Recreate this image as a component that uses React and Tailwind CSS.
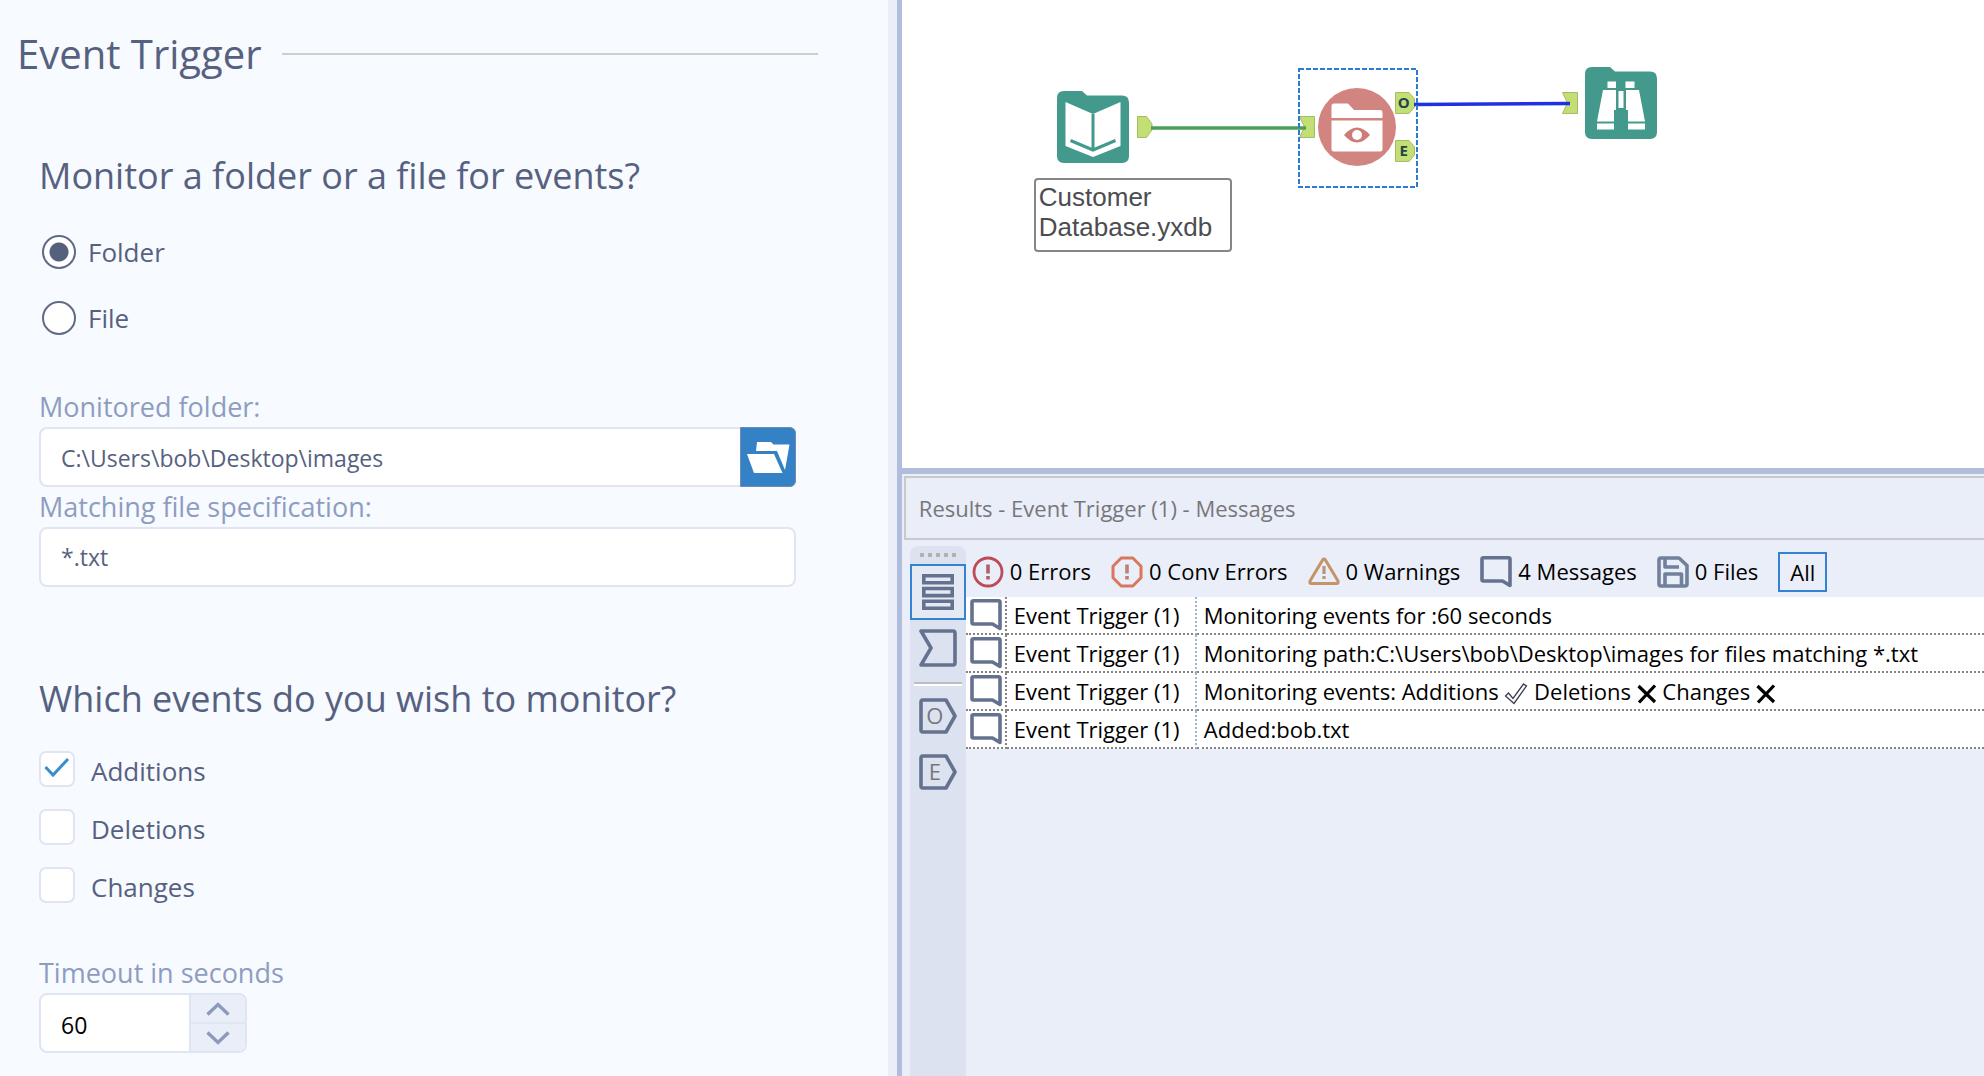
import React, { useState } from "react";

const SLATE = "#64718f";

function ChatIcon({ className }) {
  return (
    <svg className={className} viewBox="0 0 32 32" fill="none" stroke={SLATE} strokeWidth="3.6" strokeLinejoin="round" aria-hidden="true">
      <path d="M3.5 1.8H28.5Q30 1.8 30 3.3V29.5L22.5 25H3.5Q2 25 2 23.5V3.3Q2 1.8 3.5 1.8Z" />
    </svg>
  );
}

function ErrorIcon() {
  return (
    <svg className="size-8" viewBox="0 0 32 32" fill="none" aria-hidden="true">
      <circle cx="16" cy="16" r="14" stroke="#bf4a57" strokeWidth="2.8" />
      <path d="M16 8.5V17.500M16 20V23.5" stroke="#b0606c" strokeWidth="3.6" />
    </svg>
  );
}

function ConvErrorIcon() {
  return (
    <svg className="size-8" viewBox="0 0 32 32" fill="none" aria-hidden="true">
      <path d="M10.2 2H21.8L30 10.2V21.8L21.8 30H10.2L2 21.8V10.2Z" stroke="#d9775c" strokeWidth="3" strokeLinejoin="round" />
      <path d="M16 8.5V17.500M16 20V23.5" stroke="#bd7f76" strokeWidth="3.6" />
    </svg>
  );
}

function WarningIcon() {
  return (
    <svg className="size-8" viewBox="0 0 32 32" fill="none" aria-hidden="true">
      <path d="M14.6 3.9Q16 2.1 17.4 3.900L30 25.1Q30.6 27.5 28.6 27.5H3.4Q1.4 27.5 2 25.1Z" stroke="#c49468" strokeWidth="3" strokeLinejoin="round" />
      <path d="M16 10V18M16 20V23" stroke="#b89678" strokeWidth="3.2" />
    </svg>
  );
}

function SaveIcon() {
  return (
    <svg className="size-8" viewBox="0 0 32 32" fill="none" stroke="#71809b" strokeWidth="3.6" strokeLinejoin="round" aria-hidden="true">
      <path d="M4 2H22L30 9.5V28Q30 30 28 30H4Q2 30 2 28V4Q2 2 4 2Z" />
      <path d="M8 2V11H22" />
      <path d="M8 30V18H24.500V30" />
    </svg>
  );
}

function OutlineCheck() {
  return (
    <svg className="inline-block h-6 w-6 align-middle" viewBox="0 0 24 24" fill="none" stroke="#3c3c50" strokeWidth="1.3" role="img" aria-label="yes">
      <path d="M1.500 14L4.500 11L9 16.500L19.500 2L22.500 4L10 21.500Z" />
    </svg>
  );
}

function Cross() {
  return (
    <svg className="inline-block size-5 align-middle" viewBox="0 0 20 20" stroke="#000" strokeWidth="3.2" role="img" aria-label="no">
      <path d="M1.500 2L18 18M18 1.500L2 18.500" />
    </svg>
  );
}

function Radio({ id, label, checked, onChange }) {
  return (
    <div className="flex h-9 items-center">
      <input
        type="radio"
        id={id}
        name="target"
        checked={checked}
        onChange={onChange}
        className="ml-[3px] size-[34px] appearance-none rounded-full border-2 border-[#5f6b86] bg-white checked:bg-[radial-gradient(circle,#55607c_9px,white_10px)]"
      />
      <label htmlFor={id} className="pl-3 text-[26px] leading-9">{label}</label>
    </div>
  );
}

function Check({ id, label, initial }) {
  return (
    <div className="flex h-9 items-center">
      <span className="relative size-9">
        <input
          type="checkbox"
          id={id}
          defaultChecked={initial}
          className="peer block size-9 appearance-none rounded-[7px] border-2 border-[#dfe5f2] bg-white"
        />
        <svg className="pointer-events-none absolute inset-0 hidden size-9 peer-checked:block" viewBox="0 0 36 36" fill="none" stroke="#3a8ccc" strokeWidth="3" aria-hidden="true">
          <path d="M6.500 16L14 24L29 8" />
        </svg>
      </span>
      <label htmlFor={id} className="pl-4 pt-1 text-[26px] leading-9">{label}</label>
    </div>
  );
}

const fieldLabel = "block text-[27px] leading-9 text-[#8e9dbf]";
const heading = "text-[36px] leading-[48px]";

function ConfigPanel() {
  const [target, setTarget] = useState("folder");
  const [seconds, setSeconds] = useState(60);
  return (
    <div className="flex border-r-[5px] border-[#b0bddd] bg-[#eaeef8] pr-[9px]">
      <form className="flex-1 bg-[#f7faff] text-[#566180]">
        <div className="flex items-center gap-5 pl-[17px] pr-[70px] pt-[30px]">
          <h1 className="text-[40px] leading-[48px]">Event Trigger</h1>
          <hr className="flex-1 border-t-2 border-[#cfcfd1]" />
        </div>

        <div className="pl-[39px] pr-[92px]">
          <fieldset>
            <legend className={`${heading} pt-[74px]`}>Monitor a folder or a file for events?</legend>
            <div className="mt-[34px] flex flex-col gap-[30px]">
              <Radio id="t-folder" label="Folder" checked={target === "folder"} onChange={() => setTarget("folder")} />
              <Radio id="t-file" label="File" checked={target === "file"} onChange={() => setTarget("file")} />
            </div>
          </fieldset>

          <label htmlFor="folder" className={`${fieldLabel} mt-[53px]`}>Monitored folder:</label>
          <div className="mt-0.5 flex h-[60px]">
            <input
              id="folder"
              type="text"
              defaultValue={"C:\\Users\\bob\\Desktop\\images"}
              className="min-w-0 flex-1 rounded-l-lg border-2 border-r-0 border-[#dfe5f2] bg-white pl-5 pt-0.5 text-[23px]"
            />
            <button type="button" aria-label="Browse folder" className="flex w-14 items-center justify-center rounded-r-md border border-[#6f8bb0] bg-[#3482c5]">
              <svg className="h-8 w-11" viewBox="0 0 44 32" fill="white" aria-hidden="true">
                <path d="M11 1H25L27.500 3.500H43.500L39 29L31 10H10Z" />
                <path d="M1 13H28L36.500 32H8Z" />
              </svg>
            </button>
          </div>

          <label htmlFor="spec" className={`${fieldLabel} mt-0.5`}>Matching file specification:</label>
          <input
            id="spec"
            type="text"
            defaultValue="*.txt"
            className="mt-0.5 block h-[60px] w-full rounded-lg border-2 border-[#dfe5f2] bg-white pl-5 text-[23px]"
          />

          <fieldset>
            <legend className={`${heading} pt-[88px]`}>Which events do you wish to monitor?</legend>
            <div className="mt-7 flex flex-col gap-[22px]">
              <Check id="additions" label="Additions" initial />
              <Check id="deletions" label="Deletions" />
              <Check id="changes" label="Changes" />
            </div>
          </fieldset>

          <label htmlFor="timeout" className={`${fieldLabel} mt-[52px]`}>Timeout in seconds</label>
          <div className="mb-3 mt-0.5 flex h-[60px] w-[208px] overflow-hidden rounded-lg border-2 border-[#dfe5f2] bg-white">
            <input
              id="timeout"
              type="text"
              inputMode="numeric"
              value={seconds}
              onChange={(e) => setSeconds(Number(e.target.value) || 0)}
              className="min-w-0 flex-1 pl-5 pt-1 text-[23px] text-black"
            />
            <div className="flex w-14 flex-col border-l-2 border-[#dfe5f2] bg-[#eaeef8]">
              <button type="button" aria-label="Increase" onClick={() => setSeconds(seconds + 1)} className="flex flex-1 items-center justify-center border-b-2 border-[#dfe5f2]">
                <svg className="h-[14px] w-6" viewBox="0 0 24 14" fill="none" stroke="#8c9abb" strokeWidth="3.4" aria-hidden="true"><path d="M1.500 12.500L12 2.500L22.500 12.500" /></svg>
              </button>
              <button type="button" aria-label="Decrease" onClick={() => setSeconds(Math.max(0, seconds - 1))} className="flex flex-1 items-center justify-center">
                <svg className="h-[14px] w-6" viewBox="0 0 24 14" fill="none" stroke="#8c9abb" strokeWidth="3.4" aria-hidden="true"><path d="M1.500 1.500L12 11.500L22.500 1.500" /></svg>
              </button>
            </div>
          </div>
        </div>
      </form>
    </div>
  );
}

function OutPort({ letter, className }) {
  return (
    <span className={`absolute h-[22px] ${letter ? "w-5" : "w-4"} ${className}`}>
      <svg className="absolute inset-0 size-full" viewBox={letter ? "0 0 20 22" : "0 0 16 22"} fill="#c2de74" stroke="#a3bd63" aria-hidden="true">
        {letter ? <path d="M.5 .5H14L19.500 7V15L14 21.500H.5Z" /> : <path d="M.5 .5H9.500L15 8V14L9.500 21.500H.5Z" />}
      </svg>
      {letter && <span className="relative block pr-0.5 text-center text-[15px] font-bold leading-[21px] text-[#26434a]">{letter}</span>}
    </span>
  );
}

function InPort({ className }) {
  return (
    <svg className={`absolute h-[22px] w-4 ${className}`} viewBox="0 0 16 22" fill="#c2de74" stroke="#a3bd63" aria-hidden="true">
      <path d="M.5 .5H15.500V21.500H.5L5.500 11Z" />
    </svg>
  );
}

function Workflow() {
  return (
    <section aria-label="Workflow canvas" className="relative h-[468px] overflow-hidden bg-white">
      <svg className="absolute left-[155px] top-[91px] size-[72px]" viewBox="0 0 72 72" role="img" aria-label="Input data">
        <path d="M7 0H25L30 4.500H65Q72 4.500 72 11.500V65Q72 72 65 72H7Q0 72 0 65V7Q0 0 7 0Z" fill="#439a8c" />
        <path d="M8.500 11L36 23L63.500 11V55L36 66L8.500 55Z" fill="white" />
        <path d="M36 23V59M13.500 49.500L36 59L58.500 49.500" fill="none" stroke="#439a8c" strokeWidth="3" />
      </svg>
      <OutPort className="left-[235px] top-[116px]" />
      <div className="absolute left-[132px] top-[178px] w-[198px] rounded-sm border-2 border-[#868686] pb-2 pl-[3px] pt-0.5 font-['Liberation_Sans',sans-serif] text-[26px] leading-[30px] text-[#4c4c50]">
        Customer Database.yxdb
      </div>

      <InPort className="left-[397px] top-[116px]" />
      <svg className="absolute left-[416px] top-[88px] size-[78px]" viewBox="0 0 78 78" role="img" aria-label="Event trigger">
        <circle cx="39" cy="39" r="39" fill="#d28580" />
        <path d="M16 15.500H30L36 22H62Q64.500 22 64.500 24.500V30H13.500V18Q13.500 15.500 16 15.500ZM13.500 32.500H64.500V61Q64.500 63.500 62 63.500H16Q13.500 63.500 13.500 61Z" fill="white" />
        <path d="M26 47Q39 32 52 47Q39 62 26 47Z" fill="#cf7a76" />
        <circle cx="39" cy="47" r="5" fill="white" />
      </svg>
      <OutPort letter="O" className="left-[493px] top-[92px]" />
      <OutPort letter="E" className="left-[493px] top-[140px]" />

      <InPort className="left-[660px] top-[92px]" />
      <svg className="absolute left-[683px] top-[67px] size-[72px]" viewBox="0 0 72 72" role="img" aria-label="Browse">
        <path d="M7 0H25L30 4.500H65Q72 4.500 72 11.500V65Q72 72 65 72H7Q0 72 0 65V7Q0 0 7 0Z" fill="#439a8c" />
        <g fill="white">
          <path d="M22.500 14.500H31V21H22.500ZM40.500 14.500H49.500V21H40.500ZM33.500 24H38.500V41H33.500Z" />
          <path d="M18 23H31V43H29V54.500H12ZM54 23H41V43H43V54.500H60Z" />
          <path d="M12 56.500H29V62.500H12ZM43 56.500H60V62.500H43Z" />
        </g>
      </svg>

      <svg className="absolute left-[248px] top-[98px] h-8 w-[424px]" viewBox="0 0 424 32" fill="none" aria-hidden="true">
        <path d="M1 30H156" stroke="#4ba055" strokeWidth="3.600" />
        <path d="M264 6.500L420 5.500" stroke="#2032e0" strokeWidth="3.600" />
      </svg>
      <svg className="absolute left-[396px] top-[68px] size-[120px]" viewBox="0 0 120 120" fill="none" aria-hidden="true">
        <path d="M1 1H119V119H1Z" stroke="#2a7ad6" strokeWidth="2" strokeDasharray="5 2" />
      </svg>
    </section>
  );
}

function SideButton({ label, selected, children }) {
  return (
    <button type="button" aria-label={label} className={`flex h-14 w-full items-center justify-center ${selected ? "border-2 border-[#3482d2] bg-[#e4e9f4]" : ""}`}>
      {children}
    </button>
  );
}

function Anchor({ letter }) {
  return (
    <span className="relative block h-9 w-[38px]">
      <svg className="absolute inset-0 size-full" viewBox="0 0 38 36" fill="none" stroke={SLATE} strokeWidth="3.600" strokeLinejoin="round" aria-hidden="true">
        <path d="M4 2H27L36 18L27 34H4Q2 34 2 32V4Q2 2 4 2Z" />
      </svg>
      <span className="relative block pr-[6px] text-center text-[22px] leading-[34px] text-[#77777b]">{letter}</span>
    </span>
  );
}

const filters = [
  { label: "0 Errors", icon: <ErrorIcon /> },
  { label: "0 Conv Errors", icon: <ConvErrorIcon /> },
  { label: "0 Warnings", icon: <WarningIcon /> },
  { label: "4 Messages", icon: <ChatIcon className="size-8" /> },
  { label: "0 Files", icon: <SaveIcon /> },
];

const messages = [
  "Monitoring events for :60 seconds",
  "Monitoring path:C:\\Users\\bob\\Desktop\\images for files matching *.txt",
  <>Monitoring events: Additions <OutlineCheck /> Deletions <Cross /> Changes <Cross /></>,
  "Added:bob.txt",
];

function Results() {
  return (
    <section className="flex flex-1 flex-col border-t-[6px] border-[#b0bddd] bg-[#eaeef8] pt-0.5">
      <h2 className="ml-0.5 border-2 border-r-0 border-[#c9c9cb] pl-[13px] text-[22px] leading-[60px] text-[#77777b]">
        Results - Event Trigger (1) - Messages
      </h2>
      <div className="flex flex-1 pl-2 pt-[6px]">
        <div className="w-14 shrink-0 rounded-t-lg bg-[#dce2ef]">
          <div className="flex h-[18px] items-center justify-center gap-1">
            {[0, 1, 2, 3, 4].map((i) => <span key={i} className="size-1 bg-[#b3b1ae]" />)}
          </div>
          <SideButton label="Messages" selected>
            <svg className="h-9 w-8" viewBox="0 0 32 36" fill="none" stroke={SLATE} strokeWidth="3.600" aria-hidden="true">
              <path d="M1.800 1.800H30.200V8.800H1.800ZM1.800 14.500H30.200V21.600H1.800ZM1.800 27.200H30.200V34.200H1.800Z" />
            </svg>
          </SideButton>
          <SideButton label="Input anchor">
            <svg className="h-[38px] w-[38px]" viewBox="0 0 38 38" fill="none" stroke={SLATE} strokeWidth="3.600" strokeLinejoin="round" aria-hidden="true">
              <path d="M2 2H34Q36 2 36 4V34Q36 36 34 36H2L12 19Z" />
            </svg>
          </SideButton>
          <div className="mx-1 mb-0.5 mt-[6px] h-1 border-b-2 border-t-2 border-b-white border-t-[#bdbdc2]" />
          <SideButton label="Output anchor"><Anchor letter="O" /></SideButton>
          <SideButton label="Error anchor"><Anchor letter="E" /></SideButton>
        </div>

        <div className="min-w-0 flex-1">
          <div className="flex h-[51px] items-center gap-5 whitespace-nowrap pl-[6px] text-[22px] text-black">
            {filters.map((f) => (
              <button key={f.label} type="button" className="flex items-center gap-[6px]">
                {f.icon}
                {f.label}
              </button>
            ))}
            <button type="button" className="h-10 border-2 border-[#3482d2] px-[10px] leading-9">All</button>
          </div>
          <table className="w-full border-separate border-spacing-0 bg-white text-[22px] text-black">
            <tbody>
              {messages.map((m, i) => (
                <tr key={i} className="h-[38px] whitespace-nowrap">
                  <td className="w-[41px] border-b-2 border-r-2 border-dotted border-[#858585] p-0 pl-1">
                    <ChatIcon className="size-8" />
                  </td>
                  <td className="w-[190px] border-b-2 border-r-2 border-dotted border-b-[#858585] border-r-[#9db3d8] p-0 pl-[7px] leading-9">Event Trigger (1)</td>
                  <td className="border-b-2 border-dotted border-[#858585] p-0 pl-[7px] leading-9">{m}</td>
                </tr>
              ))}
            </tbody>
          </table>
        </div>
      </div>
    </section>
  );
}

export default function App() {
  return (
    <main className="grid min-h-screen grid-cols-[5fr_6fr] bg-[#eaeef8] font-['Open_Sans','Noto_Sans',sans-serif]">
      <ConfigPanel />
      <div className="flex min-w-0 flex-col">
        <Workflow />
        <Results />
      </div>
    </main>
  );
}
